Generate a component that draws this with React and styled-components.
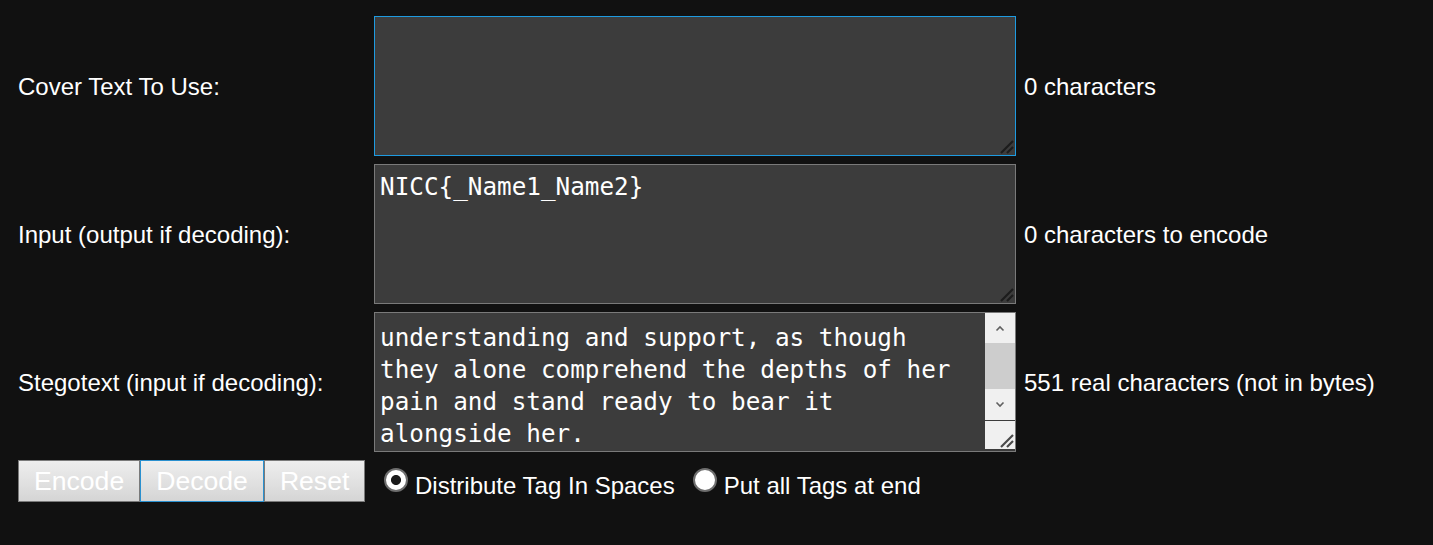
import React from "react";
import styled, { createGlobalStyle, css } from "styled-components";

const Global = createGlobalStyle`
  html, body {
    margin: 0;
    padding: 0;
    background: #111111;
  }
  body {
    font-family: "Liberation Sans", Arial, sans-serif;
    color: #ffffff;
  }
`;

const Page = styled.div`
  box-sizing: border-box;
  padding: 16px 0 0 18px;
  background: #111111;
`;

const Form = styled.div`
  display: grid;
  grid-template-columns: 348px 642px auto;
  grid-template-rows: repeat(3, 140px) auto;
  column-gap: 8px;
  row-gap: 8px;
  align-items: center;
`;

const Label = styled.div`
  font-size: 24px;
  padding-top: 2px;
  color: #ffffff;
  white-space: nowrap;
`;

const Info = styled(Label)``;

const FieldWrap = styled.div`
  position: relative;
  width: 642px;
  height: 140px;
`;

const Area = styled.textarea`
  display: block;
  box-sizing: border-box;
  width: 642px;
  height: 140px;
  margin: 0;
  padding: ${(p) => (p.$scroll ? "9px 40px 0 5px" : "6px 5px 5px 5px")};
  background: #3c3c3c;
  color: #ffffff;
  border: 1px solid ${(p) => (p.$focused ? "#1e9be0" : "#7a7a7a")};
  border-radius: 0;
  outline: none;
  font-family: "DejaVu Sans Mono", "Liberation Mono", monospace;
  font-size: 24.3px;
  line-height: 32px;
  overflow: ${(p) => (p.$scroll ? "hidden" : "auto")};
  resize: none;
`;

const GripSpot = styled.div`
  position: absolute;
  right: 2px;
  bottom: 2px;
  width: 16px;
  height: 16px;
  pointer-events: none;
  background: ${(p) => (p.$light ? "#f0f0f0" : "transparent")};
`;

const ScrollBar = styled.div`
  position: absolute;
  top: 1px;
  right: 1px;
  width: 30px;
  height: 136px;
  display: flex;
  flex-direction: column;
  background: #f0f0f0;
`;

const ArrowBtn = styled.div`
  height: 30px;
  display: flex;
  align-items: center;
  justify-content: center;
  background: #f0f0f0;
`;

const Thumb = styled.div`
  height: 46px;
  background: #cdcdcd;
`;

const Corner = styled.div`
  margin-top: 1px;
  border-top: 1px solid #3c3c3c;
  flex: 1;
  background: #f0f0f0;
  display: flex;
  align-items: flex-end;
  justify-content: flex-end;
`;

const Controls = styled.div`
  display: flex;
  align-self: start;
  height: 42px;
`;

const Button = styled.button`
  box-sizing: border-box;
  height: 42px;
  margin: 0;
  padding: 0 15px;
  font-family: "Liberation Sans", Arial, sans-serif;
  font-size: 26.6px;
  color: #ffffff;
  background: linear-gradient(#eeeeee, #d5d5d5);
  border: 1px solid #7a7a7a;
  border-radius: 0;
  cursor: pointer;
  ${(p) =>
    p.$focused &&
    css`
      border-color: #2a90cf;
    `}
`;

const Options = styled.div`
  align-self: start;
  display: flex;
  padding-left: 10px;
  gap: 18px;
`;

const Option = styled.label`
  display: flex;
  align-items: flex-start;
  gap: 7px;
  font-size: 24px;
  color: #ffffff;
  cursor: pointer;
`;

const Radio = styled.input.attrs({ type: "radio" })`
  appearance: none;
  -webkit-appearance: none;
  box-sizing: border-box;
  width: 24px;
  height: 24px;
  margin: 8px 0 0 0;
  border-radius: 50%;
  border: 2px solid #6e6e6e;
  background: #ffffff;
  flex: none;
  &:checked {
    background: radial-gradient(circle, #1a1a1a 0 4.6px, #ffffff 5.4px);
  }
`;

const OptionText = styled.span`
  margin-top: 12px;
  white-space: nowrap;
`;

const Chevron = ({ up }) => (
  <svg width="10" height="7" viewBox="0 0 10 7">
    <path
      d={up ? "M1.5 5.5 L5 2 L8.5 5.5" : "M1.5 1.5 L5 5 L8.5 1.5"}
      fill="none"
      stroke="#606060"
      strokeWidth="1.6"
    />
  </svg>
);

const GripIcon = ({ color = "#1c1c1c" }) => (
  <svg width="16" height="16" viewBox="0 0 16 16" style={{ display: "block" }}>
    <path d="M15 3 L3 15 M15 9 L9 15" stroke={color} strokeWidth="2.2" />
  </svg>
);

const stego =
  "understanding and support, as though they alone comprehend the depths of her pain and stand ready to bear it alongside her.";

export default function App() {
  return (
    <>
      <Global />
      <Page>
        <Form>
          <Label>Cover Text To Use:</Label>
          <FieldWrap>
            <Area $focused defaultValue="" />
            <GripSpot>
              <GripIcon />
            </GripSpot>
          </FieldWrap>
          <Info>0 characters</Info>

          <Label>Input (output if decoding):</Label>
          <FieldWrap>
            <Area defaultValue="NICC{_Name1_Name2}" />
            <GripSpot>
              <GripIcon />
            </GripSpot>
          </FieldWrap>
          <Info>0 characters to encode</Info>

          <Label>Stegotext (input if decoding):</Label>
          <FieldWrap>
            <Area $scroll defaultValue={stego} />
            <ScrollBar>
              <ArrowBtn>
                <Chevron up />
              </ArrowBtn>
              <Thumb />
              <ArrowBtn>
                <Chevron />
              </ArrowBtn>
              <Corner>
                <div style={{ marginRight: 1, marginBottom: 1 }}>
                  <GripIcon color="#4a4a4a" />
                </div>
              </Corner>
            </ScrollBar>
          </FieldWrap>
          <Info>551 real characters (not in bytes)</Info>

          <Controls>
            <Button>Encode</Button>
            <Button $focused>Decode</Button>
            <Button>Reset</Button>
          </Controls>
          <Options>
            <Option>
              <Radio name="mode" defaultChecked />
              <OptionText>Distribute Tag In Spaces</OptionText>
            </Option>
            <Option>
              <Radio name="mode" />
              <OptionText>Put all Tags at end</OptionText>
            </Option>
          </Options>
        </Form>
      </Page>
    </>
  );
}
